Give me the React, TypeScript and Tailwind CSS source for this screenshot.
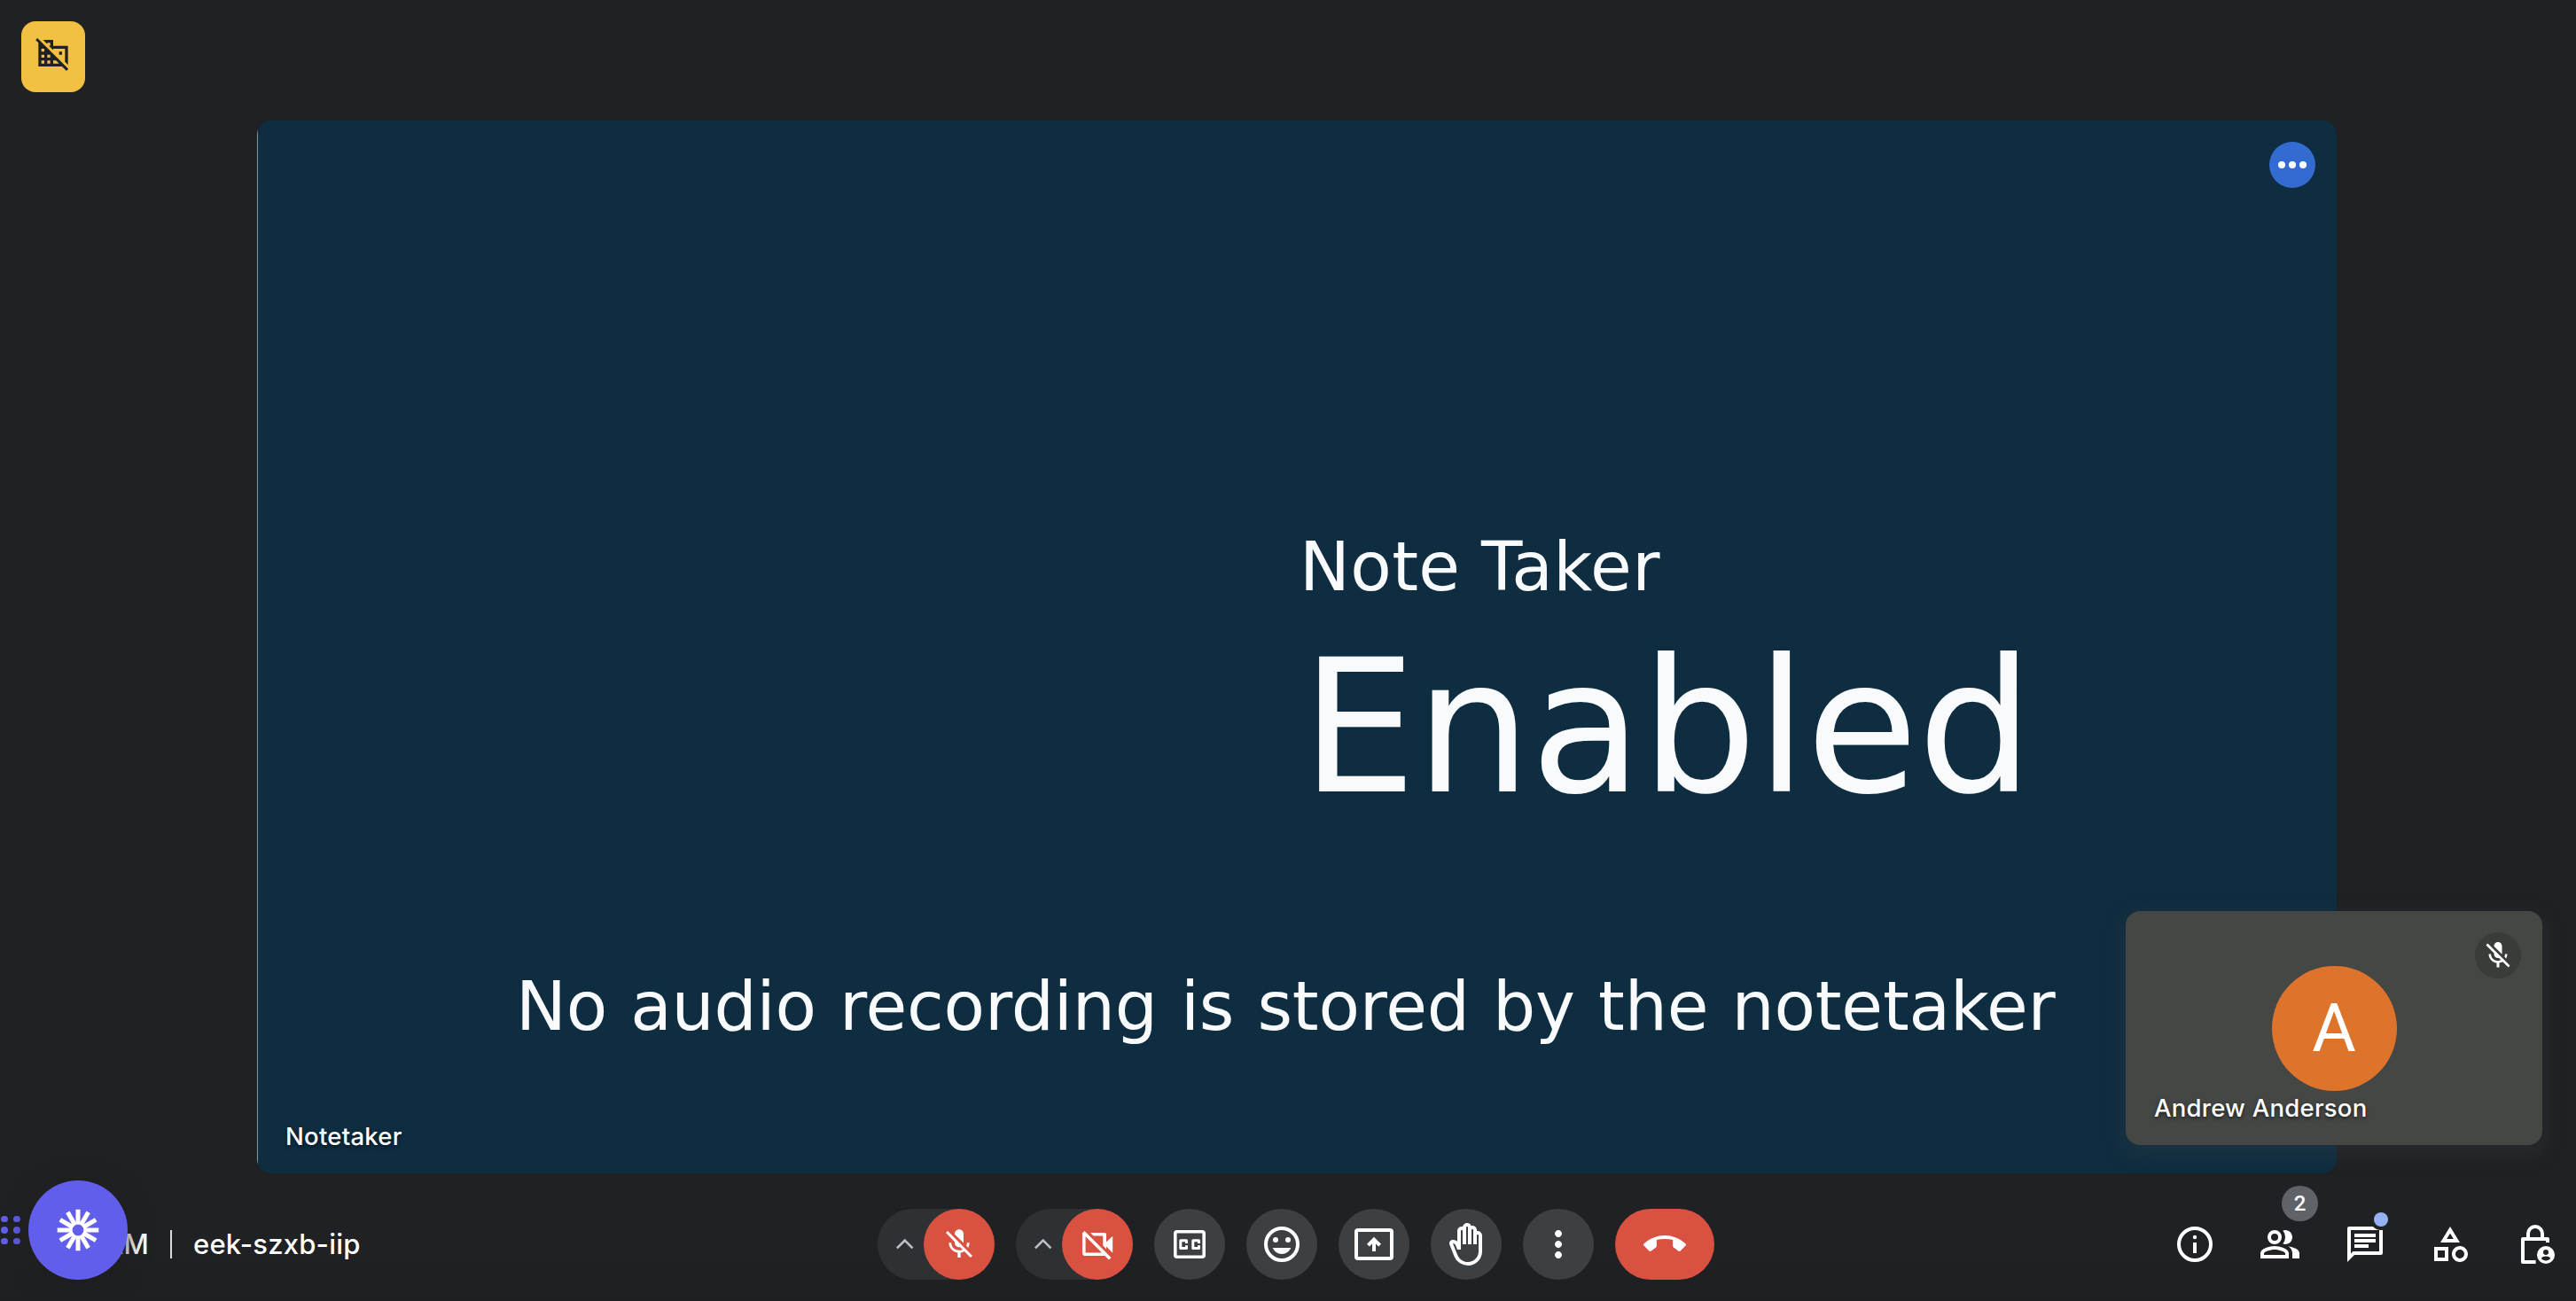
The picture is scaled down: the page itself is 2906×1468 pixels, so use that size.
import type { ReactNode } from "react";
import {
  MdDomainDisabled,
  MdMicOff,
  MdMoreVert,
  MdOutlineBackHand,
  MdOutlineCategory,
} from "react-icons/md";

const spokes = [0, 30, 60, 90, 120, 150, 180, 210, 240, 270, 300, 330];

function Chevron() {
  return (
    <svg className="ml-5 size-[22px]" viewBox="0 0 22 22" fill="none">
      <path d="M1.9 15.4l8.8-8.8 8.8 8.8" stroke="#bdc1c6" strokeWidth="2.6" />
    </svg>
  );
}

function VideoOffIcon() {
  return (
    <svg className="size-20" viewBox="0 0 80 80" fill="none">
      <path
        d="M24.8 27v22.4a1.8 1.8 0 0 0 1.8 1.8h22.6M24.2 26.2l30 30"
        stroke="#fff"
        strokeWidth="3.6"
      />
      <path
        d="M32 27h16.2a1.8 1.8 0 0 1 1.8 1.8v8.6l7.2-6.6v19L50 42.4v3L46.3 41.6V30.6H35.6z"
        fill="#fff"
      />
    </svg>
  );
}

function CaptionsIcon() {
  return (
    <svg className="size-20" viewBox="0 0 80 80" fill="none" stroke="#fff">
      <rect x="23.8" y="25.8" width="32.4" height="28.4" rx="2" strokeWidth="3.6" />
      <path d="M36.5 39v-3.2h-6.7v8.7h6.7v-3.2" strokeWidth="3" strokeLinejoin="round" />
      <path d="M50.5 39v-3.2h-6.7v8.7h6.7v-3.2" strokeWidth="3" strokeLinejoin="round" />
    </svg>
  );
}

function SmileIcon() {
  return (
    <svg className="size-12" viewBox="0 0 24 24" fill="#fff">
      <circle cx="12" cy="12" r="9" fill="none" stroke="#fff" strokeWidth="2" />
      <circle cx="8.5" cy="9.5" r="1.5" />
      <circle cx="15.5" cy="9.5" r="1.5" />
      <path d="M12 17.5c2.33 0 4.31-1.46 5.11-3.5H6.89c.8 2.04 2.78 3.5 5.11 3.5z" />
    </svg>
  );
}

function PresentIcon() {
  return (
    <svg className="size-12" viewBox="0 0 24 24" fill="none" stroke="#fff">
      <rect x="2" y="4" width="20" height="16" rx="1" strokeWidth="2" />
      <path d="M12 16V9.5M8.7 12.6L12 9.3l3.3 3.3" strokeWidth="2" />
    </svg>
  );
}

function HangUpIcon() {
  return (
    <svg className="size-12" viewBox="0 0 48 48" fill="#fff">
      <path d="M24 14c8.8 0 16.8 3.4 23.4 9.2.8.7.8 1.7.1 2.4l-5.9 5.8c-.7.7-1.7.7-2.4.1l-5.3-4.1c-.5-.4-.8-1-.8-1.6v-6.9c-2.9-.6-6-.9-9.1-.9s-6.2.3-9.1.9v6.9c0 .6-.3 1.2-.8 1.6l-5.3 4.1c-.7.6-1.7.6-2.4-.1L.5 25.6c-.7-.7-.7-1.7.1-2.4C7.2 17.4 15.2 14 24 14z" />
    </svg>
  );
}

function InfoIcon() {
  return (
    <svg className="size-12" viewBox="0 0 24 24" fill="#fff">
      <circle cx="12" cy="12" r="9" fill="none" stroke="#fff" strokeWidth="2" />
      <circle cx="12" cy="8" r="1.1" />
      <path d="M11 11h2v6h-2z" />
    </svg>
  );
}

function PeopleIcon() {
  return (
    <svg className="size-12" viewBox="0 0 24 24" fill="#fff">
      <circle cx="9" cy="8" r="3" fill="none" stroke="#fff" strokeWidth="2" />
      <path d="M9 13c-2.67 0-8 1.34-8 4v3h16v-3c0-2.66-5.33-4-8-4zm6 5H3v-.99C3.2 16.29 6.3 15 9 15s5.8 1.29 6 2v1z" />
      <path d="M15 12c2.21 0 4-1.79 4-4s-1.79-4-4-4c-.47 0-.91.1-1.33.24a5.98 5.98 0 0 1 0 7.52c.42.14.86.24 1.33.24z" />
      <path d="M16.67 13.13C18.04 14.06 19 15.32 19 17v3h4v-3c0-2.18-3.57-3.47-6.33-3.87z" />
    </svg>
  );
}

function ChatIcon() {
  return (
    <svg className="size-12 overflow-visible" viewBox="0 0 24 24" fill="#fff">
      <path
        d="M3 2h18a1 1 0 0 1 1 1v14a1 1 0 0 1-1 1H6l-4 4V3a1 1 0 0 1 1-1zm1 2v13.2L5.200 16H20V4z"
        fillRule="evenodd"
      />
      <path d="M6 6h12v2H6zM6 9h12v2H6zM6 12h8v2H6z" />
      {/* unread dot with a ring that cuts into the bubble */}
      <circle cx="21" cy="-2" r="6" fill="#202124" />
      <circle cx="21" cy="-2" r="4" fill="#94b2f2" />
    </svg>
  );
}

function HostLockIcon() {
  return (
    <svg className="size-12" viewBox="0 0 24 24" fill="none">
      <path d="M19 11V9H5v13h7.3" stroke="#fff" strokeWidth="2" strokeLinejoin="round" />
      <path d="M8 8.5V6a4 4 0 0 1 8 0v2.5" stroke="#fff" strokeWidth="2" />
      <circle cx="18" cy="18" r="6" fill="#202124" />
      <circle cx="18" cy="18" r="5" fill="#fff" />
      <circle cx="18" cy="16.5" r="1.5" fill="#202124" />
      <path d="M15.4 20c.5-.8 1.5-1.2 2.6-1.2s2.1.4 2.6 1.2c-.6.8-1.6 1.2-2.6 1.2s-2-.4-2.6-1.2z" fill="#202124" />
    </svg>
  );
}

function RoundButton({ children }: { children: ReactNode }) {
  return (
    <button className="flex size-20 items-center justify-center rounded-full bg-[#3c4043] text-[48px] text-white">
      {children}
    </button>
  );
}

function SplitButton({ children }: { children: ReactNode }) {
  return (
    <div className="flex h-20 w-[132px] items-center justify-between rounded-full bg-[#2e3134]">
      <Chevron />
      <button className="flex size-20 items-center justify-center rounded-full bg-[#d95140] text-[40px] text-white">
        {children}
      </button>
    </div>
  );
}

function NameLabel({ name }: { name: string }) {
  return (
    <span className="absolute bottom-[26px] left-8 whitespace-nowrap font-[Inter,sans-serif] text-[27.5px] font-medium leading-8 tracking-[0.25px] text-white [text-shadow:0_2px_4px_rgba(0,0,0,0.6)]">
      {name}
    </span>
  );
}

function Stage() {
  return (
    <main className="relative ml-[290px] h-[1188px] w-[2346px] overflow-hidden rounded-2xl bg-[#0f2d40] font-['DejaVu_Sans',sans-serif] text-[#f8fafc]">
      <p className="ml-[1176px] mt-[464px] whitespace-nowrap text-[76px] leading-[80px] tracking-[0.4px] [word-spacing:-1px]">
        Note Taker
      </p>
      <p className="ml-[1178px] mt-[38px] origin-[0_176px] scale-y-[1.014] whitespace-nowrap text-[205.5px] leading-[208px] tracking-[-0.8px]">
        Enabled
      </p>
      <p className="ml-[292px] mt-[170px] whitespace-nowrap text-[76px] leading-[80px] tracking-[-0.18px] [word-spacing:2.2px]">
        No audio recording is stored by the notetaker
      </p>

      <span className="absolute inset-y-0 left-0 w-px bg-[#7b9a9b]" />
      <button className="absolute right-6 top-6 flex size-[52px] items-center justify-center gap-1 rounded-full bg-[#346bd1]">
        <span className="size-2 rounded-full bg-white" />
        <span className="size-2 rounded-full bg-white" />
        <span className="size-2 rounded-full bg-white" />
      </button>
      <NameLabel name="Notetaker" />
    </main>
  );
}

function SelfTile() {
  return (
    <section className="absolute left-[2398px] top-[1028px] flex h-[264px] w-[470px] items-center justify-center rounded-2xl bg-[#454745] shadow-[0_8px_20px_6px_rgba(60,64,67,0.25)]">
      <div className="flex size-[141px] items-center justify-center rounded-full bg-[#de742c] font-[Roboto,sans-serif] text-[76px] text-white">
        A
      </div>
      <div className="absolute right-6 top-6 flex size-[52px] items-center justify-center rounded-full bg-[#3a3c3a] text-[36px] text-white">
        <MdMicOff />
      </div>
      <NameLabel name="Andrew Anderson" />
    </section>
  );
}

function RecorderWidget() {
  return (
    <div className="absolute left-[1px] top-[1332px] flex items-center gap-[9px]">
      <div className="grid w-[22px] grid-cols-2 gap-x-[6px] gap-y-[5px]">
        {[0, 1, 2, 3, 4, 5].map((dot) => (
          <span key={dot} className="size-[7.5px] rounded-full bg-[#615eeb]" />
        ))}
      </div>
      <div className="flex size-28 items-center justify-center rounded-full bg-[#615eeb] shadow-[0_4px_24px_4px_rgba(30,30,30,0.6)]">
        <svg className="size-12" viewBox="-24 -24 48 48">
          {spokes.map((angle) => (
            <path key={angle} d="M0-7V-23.3" stroke="#fff" strokeWidth="5" transform={`rotate(${angle})`} />
          ))}
          <circle r="8" fill="none" stroke="#fff" strokeWidth="3.2" />
        </svg>
      </div>
    </div>
  );
}

function BottomBar() {
  return (
    <footer className="flex h-36 items-start bg-linear-to-b from-[#202124] from-60% to-[#1e1f21] pt-10">
      <div className="flex h-20 w-[990px] shrink-0 items-center font-[Inter,sans-serif] text-[31px] font-medium tracking-[0.2px] text-white">
        <span className="w-[168px] text-right">AM</span>
        <span className="ml-6 h-8 w-0.5 bg-[#dadce0]" />
        <span className="ml-6">eek-szxb-iip</span>
      </div>

      <div className="flex shrink-0 gap-6">
        <SplitButton>
          <MdMicOff />
        </SplitButton>
        <SplitButton>
          <VideoOffIcon />
        </SplitButton>
        <RoundButton>
          <CaptionsIcon />
        </RoundButton>
        <RoundButton>
          <SmileIcon />
        </RoundButton>
        <RoundButton>
          <PresentIcon />
        </RoundButton>
        <RoundButton>
          <MdOutlineBackHand />
        </RoundButton>
        <RoundButton>
          <MdMoreVert />
        </RoundButton>
        <button className="flex h-20 w-28 items-center justify-center rounded-full bg-[#d95140]">
          <HangUpIcon />
        </button>
      </div>

      <nav className="ml-[494px] flex h-20 shrink-0 items-center text-[48px] text-white *:flex *:w-24 *:justify-center">
        <div>
          <InfoIcon />
        </div>
        <div className="relative">
          <PeopleIcon />
          <span className="absolute -top-[42px] left-[50px] flex h-10 w-[41px] items-center justify-center rounded-full bg-[#5f6368] font-[Roboto,sans-serif] text-2xl font-medium">
            2
          </span>
        </div>
        <div>
          <ChatIcon />
        </div>
        <div>
          <MdOutlineCategory />
        </div>
        <div>
          <HostLockIcon />
        </div>
      </nav>
    </footer>
  );
}

export default function App() {
  return (
    <div className="relative h-[1468px] w-[2906px] overflow-hidden bg-[#202124]">
      <header className="h-[136px] p-6">
        <div className="flex h-20 w-[72px] justify-center rounded-2xl bg-[#f2c043] pt-4 text-[40px] text-[#202124]">
          <MdDomainDisabled />
        </div>
      </header>
      <Stage />
      <BottomBar />
      <SelfTile />
      <RecorderWidget />
    </div>
  );
}
